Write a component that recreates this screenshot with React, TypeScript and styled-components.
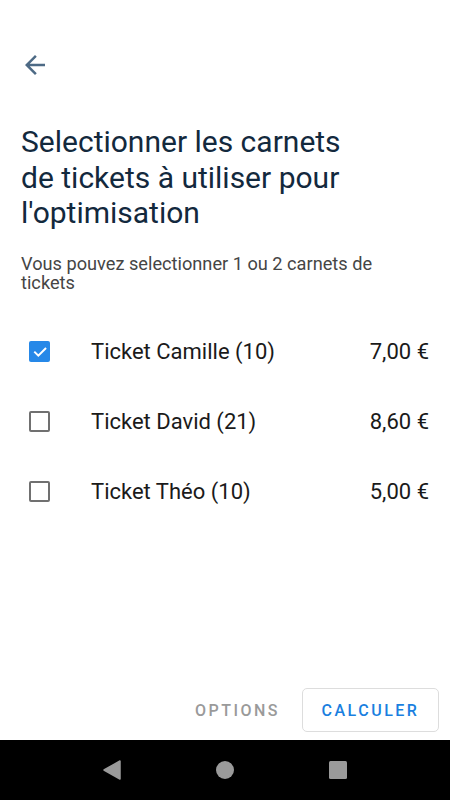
import React, { useState } from "react";
import styled, { createGlobalStyle } from "styled-components";

interface Carnet {
  id: number;
  name: string;
  price: string;
}

const carnets: Carnet[] = [
  { id: 1, name: "Ticket Camille (10)", price: "7,00 €" },
  { id: 2, name: "Ticket David (21)", price: "8,60 €" },
  { id: 3, name: "Ticket Théo (10)", price: "5,00 €" },
];

const App: React.FC = () => {
  const [selected, setSelected] = useState<number[]>([1]);

  const toggle = (id: number) => {
    setSelected((prev) =>
      prev.includes(id) ? prev.filter((x) => x !== id) : [...prev, id]
    );
  };

  return (
    <>
      <GlobalStyle />
      <Screen>
        <Content>
          <BackButton aria-label="Retour">
            <svg width="30" height="30" viewBox="0 0 24 24" fill="#4d6a85">
              <path d="M20 11H7.83l5.59-5.59L12 4l-8 8 8 8 1.41-1.41L7.83 13H20v-2z" />
            </svg>
          </BackButton>
          <Title>
            Selectionner les carnets
            <br />
            de tickets à utiliser pour
            <br />
            l'optimisation
          </Title>
          <Subtitle>
            Vous pouvez selectionner 1 ou 2 carnets de
            <br />
            tickets
          </Subtitle>
          <List>
            {carnets.map((c) => {
              const checked = selected.includes(c.id);
              return (
                <Row key={c.id} onClick={() => toggle(c.id)}>
                  <CheckBox checked={checked}>
                    {checked && (
                      <svg width="16" height="16" viewBox="0 0 24 24" fill="none">
                        <path
                          d="M4.5 12.5l5 5L20 7"
                          stroke="#fff"
                          strokeWidth="3"
                          strokeLinecap="square"
                        />
                      </svg>
                    )}
                  </CheckBox>
                  <Label>{c.name}</Label>
                  <Price>{c.price}</Price>
                </Row>
              );
            })}
          </List>
        </Content>
        <Footer>
          <TextButton>Options</TextButton>
          <OutlinedButton>Calculer</OutlinedButton>
        </Footer>
        <NavBar>
          <svg width="20" height="20" viewBox="0 0 20 20">
            <path
              d="M18 1 L18 19 L2 10 Z"
              fill="#9a9a9a"
              strokeLinejoin="round"
              stroke="#9a9a9a"
              strokeWidth="1.5"
            />
          </svg>
          <svg width="20" height="20" viewBox="0 0 20 20">
            <circle cx="10" cy="10" r="9" fill="#9a9a9a" />
          </svg>
          <svg width="20" height="20" viewBox="0 0 20 20">
            <rect x="1" y="1" width="18" height="18" rx="1.5" fill="#9a9a9a" />
          </svg>
        </NavBar>
      </Screen>
    </>
  );
};

const GlobalStyle = createGlobalStyle`
  html, body {
    margin: 0;
    padding: 0;
    background: #ffffff;
  }
  * {
    box-sizing: border-box;
  }
`;

const Screen = styled.div`
  width: 450px;
  height: 800px;
  display: flex;
  flex-direction: column;
  background: #ffffff;
  font-family: Roboto, "Noto Sans", sans-serif;
  overflow: hidden;
`;

const Content = styled.div`
  flex: 1;
  display: flex;
  flex-direction: column;
  padding: 50px 21px 0 21px;
`;

const BackButton = styled.button`
  width: 30px;
  height: 30px;
  padding: 0;
  margin-left: -1px;
  border: none;
  background: none;
  display: flex;
  align-items: center;
  justify-content: center;
  cursor: pointer;
`;

const Title = styled.h1`
  margin: 44px 0 0 0;
  font-size: 30px;
  line-height: 35.5px;
  font-weight: 400;
  color: #13293d;
`;

const Subtitle = styled.p`
  margin: 23px 0 0 0;
  font-size: 18.2px;
  line-height: 19px;
  color: #454545;
`;

const List = styled.div`
  display: flex;
  flex-direction: column;
  margin-top: 25px;
`;

const Row = styled.div`
  display: flex;
  align-items: center;
  height: 70px;
  cursor: pointer;
`;

const CheckBox = styled.span<{ checked: boolean }>`
  width: 21px;
  height: 21px;
  margin-left: 8px;
  border-radius: 2px;
  display: flex;
  align-items: center;
  justify-content: center;
  background: ${({ checked }) => (checked ? "#2688e8" : "transparent")};
  border: ${({ checked }) => (checked ? "none" : "2px solid #707070")};
`;

const Label = styled.span`
  flex: 1;
  margin-left: 41px;
  font-size: 22px;
  color: #1a1a1a;
`;

const Price = styled.span`
  font-size: 22px;
  color: #1a1a1a;
`;

const Footer = styled.div`
  display: flex;
  justify-content: flex-end;
  align-items: center;
  gap: 22px;
  padding: 0 11px 8px 0;
`;

const TextButton = styled.button`
  border: none;
  background: none;
  font-family: Roboto, sans-serif;
  font-size: 16px;
  font-weight: 500;
  letter-spacing: 2.5px;
  text-transform: uppercase;
  color: #9a9a9a;
  padding: 0;
  cursor: pointer;
`;

const OutlinedButton = styled.button`
  width: 137px;
  height: 44px;
  border: 1px solid #dddddd;
  border-radius: 5px;
  background: #ffffff;
  font-family: Roboto, sans-serif;
  font-size: 16px;
  font-weight: 500;
  letter-spacing: 2.5px;
  text-transform: uppercase;
  color: #1a7fe0;
  cursor: pointer;
`;

const NavBar = styled.div`
  height: 60px;
  background: #000000;
  display: flex;
  align-items: center;
  justify-content: center;
  gap: 93px;
`;

export default App;
